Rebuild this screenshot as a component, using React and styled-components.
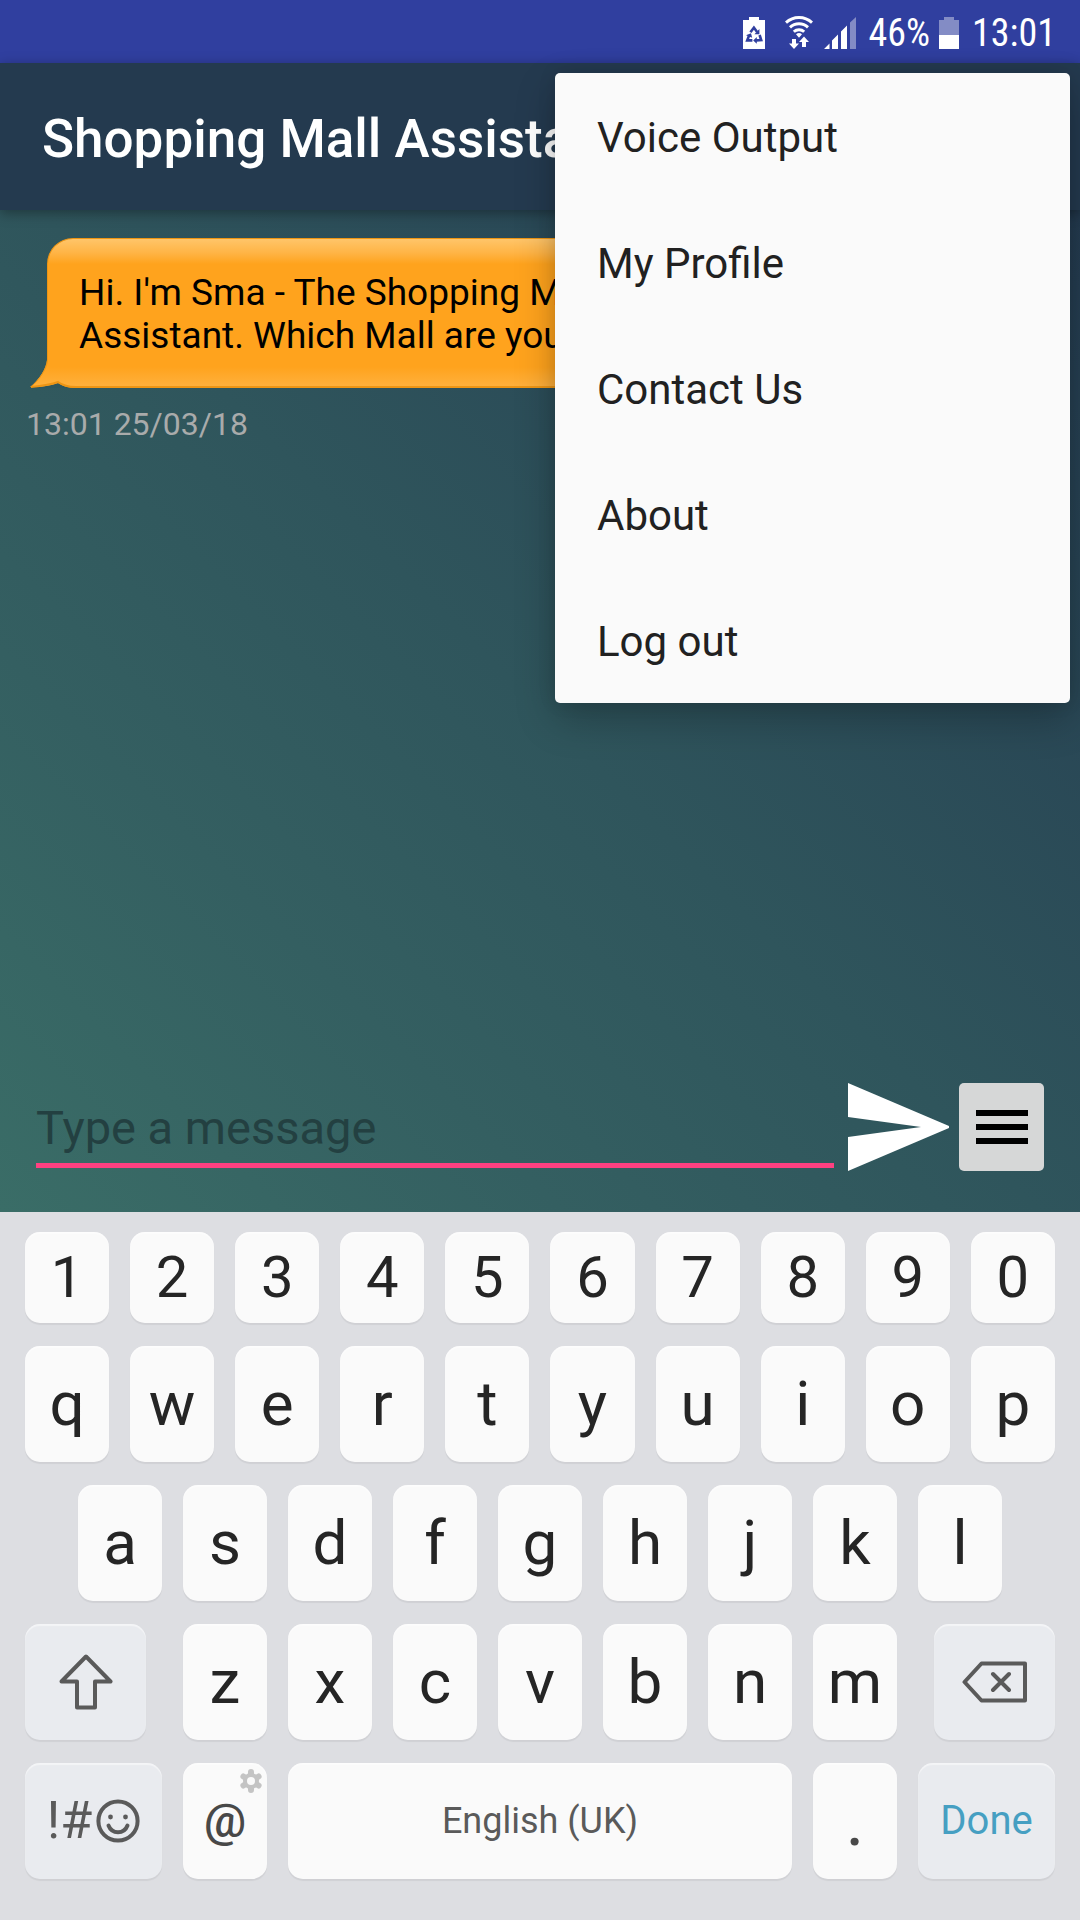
import React from "react";
import styled, { createGlobalStyle } from "styled-components";

const Global = createGlobalStyle`
  *, *::before, *::after { box-sizing: border-box; }
  html, body, #root { height: 100%; }
  body { margin: 0; font-family: Roboto, "Noto Sans", sans-serif; background: #dddee2; }
  button, input { font: inherit; }
`;

const Screen = styled.div`
  position: relative;
  min-height: 100%;
  display: flex;
  flex-direction: column;
  overflow: hidden;
`;

const StatusBar = styled.div`
  display: flex;
  align-items: center;
  justify-content: flex-end;
  height: 63px;
  padding: 2px 24px 0;
  gap: 13px;
  background: #303f9f;
  color: #fff;
  font-family: "Roboto Condensed", Roboto, sans-serif;
  font-size: 38px;
  line-height: 40px;
  svg { display: block; flex: none; }
`;

const StatusGroup = styled.div`
  display: flex;
  align-items: center;
  gap: ${(p) => p.$gap}px;
`;

const AppBar = styled.header`
  position: relative;
  display: flex;
  align-items: center;
  height: 147px;
  padding: 4px 42px 0;
  background: #243a4f;
  box-shadow: 0 3px 12px rgba(0, 0, 0, 0.35);
`;

const Title = styled.h1`
  margin: 0;
  color: #fff;
  font-size: 53px;
  font-weight: 500;
  white-space: nowrap;
`;

const Chat = styled.main`
  flex: 1;
  display: flex;
  flex-direction: column;
  background: linear-gradient(45deg, #3a6d67 0%, #345f61 27%, #2f555c 50%, #243b50 100%);
`;

const Messages = styled.section`
  flex: 1;
  padding: 28px 30px 0;
`;

const Bubble = styled.div`
  position: relative;
  width: 760px;
  max-width: 100%;
  margin-left: 17px;
  padding: 32px 31px 29px;
  border: 1px solid #ee9514;
  border-bottom-width: 2px;
  border-radius: 26px 26px 26px 0;
  background: linear-gradient(180deg, #ffc569 0, #ffb445 14px, #ffa31d 25px, #ffa31d 128px, #ffb03c 100%);
  color: #000;
  font-size: 37px;
  line-height: 43px;
`;

const Tail = styled.svg`
  position: absolute;
  left: -18px;
  bottom: -2px;
`;

const Stamp = styled.time`
  display: block;
  margin: 15px 0 0 -4px;
  color: #a9abab;
  font-size: 32px;
  line-height: 42px;
`;

const Composer = styled.form`
  display: flex;
  align-items: center;
  padding: 0 36px 41px;
`;

const Field = styled.input`
  flex: 1;
  min-width: 0;
  height: 82px;
  padding: 6px 0 0;
  border: 0;
  border-bottom: 5px solid #ff4081;
  outline: 0;
  background: none;
  color: #111;
  font-size: 47px;
  &::placeholder { color: #234041; opacity: 1; }
`;

const SendButton = styled.button`
  display: flex;
  margin-left: 14px;
  padding: 0;
  border: 0;
  background: none;
`;

const OptionsButton = styled.button`
  display: flex;
  align-items: center;
  justify-content: center;
  width: 85px;
  height: 88px;
  margin-left: 10px;
  padding: 0;
  border: 0;
  border-radius: 5px;
  background: #d6d7d7;
`;

const Menu = styled.nav`
  position: absolute;
  top: 73px;
  right: 10px;
  width: 515px;
  border-radius: 5px;
  background: #fafafa;
  box-shadow: 0 16px 40px rgba(0, 0, 0, 0.24), 0 0 18px rgba(0, 0, 0, 0.1);
`;

const MenuItem = styled.button`
  display: block;
  width: 100%;
  height: 126px;
  padding: 3px 42px 0;
  border: 0;
  background: none;
  color: #212121;
  font-size: 42px;
  text-align: left;
`;

const Keyboard = styled.section`
  display: flex;
  flex-direction: column;
  gap: 23px;
  padding: 20px 25px 41px;
  background: #dddee2;
`;

const KeyRow = styled.div`
  display: flex;
  flex: ${(p) => (p.$grow ? 1 : "none")};
  gap: 21px;
  padding: 0 ${(p) => p.$inset || 0}px;
`;

const Key = styled.button`
  position: relative;
  display: flex;
  align-items: center;
  justify-content: center;
  gap: 4px;
  flex: ${(p) => (p.$width ? `0 0 ${p.$width}px` : "1 1 0")};
  min-width: 0;
  height: ${(p) => p.$height || 116}px;
  padding: 0 0 1px;
  border: 0;
  border-radius: 15px;
  background: ${(p) => (p.$dim ? "#e9ebef" : "#fafafa")};
  box-shadow: 0 2px 1px rgba(0, 0, 0, 0.06), inset 0 2px 1px rgba(255, 255, 255, 0.5);
  color: ${(p) => p.$color || "#252525"};
  font-size: ${(p) => p.$size || 62}px;
  font-weight: ${(p) => p.$weight || 400};
`;

const KeyBadge = styled.span`
  position: absolute;
  top: 6px;
  right: 5px;
  display: flex;
`;

const RecycleBattery = () => (
  <svg width="22" height="32" viewBox="0 0 22 32" aria-hidden="true">
    <path fill="#fff" d="M6 0h10v3h6v29H0V3h6z" />
    <g fill="none" stroke="#303f9f" strokeWidth="2.6">
      <path d="M7.4 15.2 10.9 10.6l3.2 4.4" />
      <path d="M16.6 18 18.2 23 13 23.4" />
      <path d="M9.4 23.4H4.2l2-5.2" />
    </g>
    <path fill="#303f9f" d="M16.4 12v5.2h-5zM13.8 20v6.8l-3.6-3.4zM3 18.2l5-2 1.200 4.600z" />
  </svg>
);

const WifiIcon = () => (
  <svg width="28" height="33" viewBox="0 0 28 33" aria-hidden="true">
    <g fill="none" stroke="#fff" strokeWidth="2.9">
      <path d="M1 6.6a19 19 0 0 1 26 0" />
      <path d="M5 11.4a13 13 0 0 1 18 0" />
      <path d="M8.8 15.8a7.6 7.6 0 0 1 10.4 0" />
    </g>
    <path fill="#fff" d="M11 18.2a4.6 4.6 0 0 1 6 0l-3 3.6zM7 23h4v4.500h3l-5 5.500-5-5.500h3zM17 31h4v-5h3L19 20.500 14 26h3z" />
  </svg>
);

const SignalIcon = () => (
  <svg width="32" height="32" viewBox="0 0 32 32" aria-hidden="true">
    <path fill="#fff" d="M0 32l5.500-5.500V32zM8 23.500l6-6V32H8zM17 14.500l6-6V32h-6z" />
    <path fill="#838cc5" d="M26 5.500L32 0v32h-6z" />
  </svg>
);

const BatteryIcon = () => (
  <svg width="20" height="32" viewBox="0 0 20 32" aria-hidden="true">
    <path fill="#838cc5" d="M5 0h10v3h5v16H0V3h5z" />
    <path fill="#fff" d="M0 18h20v14H0z" />
  </svg>
);

const SendIcon = () => (
  <svg width="101" height="88" viewBox="0 0 101 88" aria-hidden="true">
    <path fill="#fff" d="M0 0 101 43v2L0 88V54l73-10L0 34z" />
  </svg>
);

const BarsIcon = () => (
  <svg width="52" height="34" viewBox="0 0 52 34" aria-hidden="true">
    <path d="M0 0h52v6H0zM0 14h52v6H0zM0 28h52v6H0z" />
  </svg>
);

const ShiftIcon = () => (
  <svg width="54" height="56" viewBox="0 0 54 56" fill="none" stroke="#5a5a5a" strokeWidth="4" strokeLinejoin="round" aria-hidden="true">
    <path d="M27 2.500 51.500 27.500H36v26H18v-26H2.500z" />
  </svg>
);

const BackspaceIcon = () => (
  <svg width="66" height="42" viewBox="0 0 66 42" fill="none" stroke="#5a5a5a" strokeWidth="4" strokeLinejoin="round" strokeLinecap="round" aria-hidden="true">
    <path d="M19.500 2.500H63v37H19.500L2.500 21zM31 13l16 16M47 13 31 29" />
  </svg>
);

const SmileIcon = () => (
  <svg width="44" height="44" viewBox="0 0 44 44" aria-hidden="true">
    <g fill="none" stroke="#5a5a5a" strokeWidth="4" strokeLinecap="round">
      <circle cx="22" cy="22" r="19.600" />
      <path d="M12.500 26.500c3.500 9 15.500 9 19 0" />
    </g>
    <g fill="#5a5a5a">
      <circle cx="14.500" cy="18" r="2.400" />
      <circle cx="29.500" cy="18" r="2.400" />
    </g>
  </svg>
);

const GearIcon = () => (
  <svg width="22" height="24" viewBox="0 0 22 24" aria-hidden="true">
    <g stroke="#c4c4c4" strokeWidth="6" strokeLinecap="round">
      <path d="M11 3v18M3.400 7.500l15.200 9M3.400 16.500l15.200-9" />
    </g>
    <circle cx="11" cy="12" r="8" fill="#c4c4c4" />
    <circle cx="11" cy="12" r="4" fill="#fafafa" />
  </svg>
);

const MENU = ["Voice Output", "My Profile", "Contact Us", "About", "Log out"];
const letters = (s) => [...s].map((c) => <Key type="button" key={c}>{c}</Key>);

export default function App() {
  return (
    <Screen>
      <Global />
      <StatusBar>
        <StatusGroup $gap={20}>
          <RecycleBattery />
          <StatusGroup $gap={11}>
            <WifiIcon />
            <SignalIcon />
          </StatusGroup>
        </StatusGroup>
        <StatusGroup $gap={9}>
          <span>46%</span>
          <BatteryIcon />
        </StatusGroup>
        <time>13:01</time>
      </StatusBar>
      <AppBar>
        <Title>Shopping Mall Assistant</Title>
      </AppBar>
      <Chat>
        <Messages>
          <Bubble>
            Hi. I'm Sma - The Shopping Mall<br />
            Assistant. Which Mall are you in?
            <Tail width="50" height="28" viewBox="0 0 50 28" aria-hidden="true">
              <defs>
                <linearGradient id="tail" x1="0" y1="0" x2="0" y2="1">
                  <stop offset="0.2" stopColor="#ffa31d" />
                  <stop offset="1" stopColor="#ffb03c" />
                </linearGradient>
              </defs>
              <path fill="url(#tail)" d="M19 0h-2C16 9 9 20 0 27h19z" />
              <path fill="none" stroke="#ee9514" strokeWidth="1" d="M17.500 0C17 9 9 20 1 27" />
              <path fill="#2f565c" d="M0 28c10-1 20-2 28-5 5 3 10 5 18 5z" />
              <path fill="none" stroke="#ee9514" strokeWidth="2" d="M1 27c10-1 19-2 27-5 4 3 9 5 18 5" />
            </Tail>
          </Bubble>
          <Stamp>13:01 25/03/18</Stamp>
        </Messages>
        <Composer onSubmit={(e) => e.preventDefault()}>
          <Field aria-label="Message" placeholder="Type a message" />
          <SendButton type="submit" aria-label="Send"><SendIcon /></SendButton>
          <OptionsButton type="button" aria-label="Options"><BarsIcon /></OptionsButton>
        </Composer>
      </Chat>
      <Keyboard aria-label="Keyboard">
        <KeyRow>
          {[..."1234567890"].map((c) => (
            <Key type="button" key={c} $height={91} $size={58}>{c}</Key>
          ))}
        </KeyRow>
        <KeyRow>{letters("qwertyuiop")}</KeyRow>
        <KeyRow $inset={53}>{letters("asdfghjkl")}</KeyRow>
        <KeyRow>
          <Key type="button" $dim $width={121} aria-label="Shift"><ShiftIcon /></Key>
          <KeyRow $grow $inset={16}>{letters("zxcvbnm")}</KeyRow>
          <Key type="button" $dim $width={121} aria-label="Backspace"><BackspaceIcon /></Key>
        </KeyRow>
        <KeyRow>
          <Key type="button" $dim $width={137} $size={52} $color="#5a5a5a">
            <span>!#</span><SmileIcon />
          </Key>
          <Key type="button" $width={84} $size={47} $weight={500} $color="#484848">
            @
            <KeyBadge><GearIcon /></KeyBadge>
          </Key>
          <Key type="button" $size={36} $color="#5a5a5a">English (UK)</Key>
          <Key type="button" $width={84} $size={72} $color="#484848">.</Key>
          <Key type="button" $dim $width={137} $size={40} $color="#469fc2">Done</Key>
        </KeyRow>
      </Keyboard>
      <Menu aria-label="More options">
        {MENU.map((m) => <MenuItem type="button" key={m}>{m}</MenuItem>)}
      </Menu>
    </Screen>
  );
}
